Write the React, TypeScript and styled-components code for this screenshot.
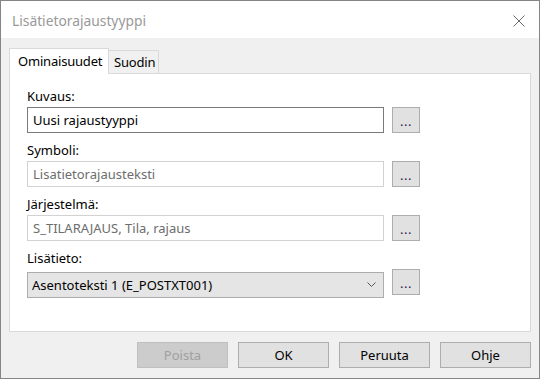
import React from 'react'
import styled, { createGlobalStyle } from 'styled-components'

const GlobalStyle = createGlobalStyle`
  html, body {
    margin: 0;
    padding: 0;
    background: #ffffff;
  }
`

const Window = styled.div`
  width: 540px;
  height: 379px;
  box-sizing: border-box;
  border: 1px solid #858585;
  display: flex;
  flex-direction: column;
  background: #f0f0f0;
  font-family: 'Noto Sans', 'Open Sans', sans-serif;
  font-size: 13px;
  color: #000;
`

const TitleBar = styled.div`
  height: 37px;
  flex: none;
  background: #fff;
  display: flex;
  align-items: center;
  justify-content: space-between;
  padding: 0 14px 0 11px;
`

const Title = styled.span`
  font-size: 13.8px;
  color: #999999;
  margin-top: 1px;
`

const CloseButton = styled.span`
  display: flex;
  width: 12px;
  height: 12px;
  margin-top: 2px;
`

const Body = styled.div`
  flex: 1;
  display: flex;
  flex-direction: column;
  padding: 10px 8px 0 8px;
`

const TabStrip = styled.div`
  display: flex;
  align-items: flex-end;
  height: 25px;
  position: relative;
  z-index: 1;
`

const Tab = styled.div<{ $active?: boolean }>`
  box-sizing: border-box;
  display: flex;
  align-items: center;
  border: 1px solid #d9d9d9;
  border-bottom: none;
  height: ${(p) => (p.$active ? '26px' : '23px')};
  margin-bottom: ${(p) => (p.$active ? '-1px' : '0')};
  background: ${(p) => (p.$active ? '#ffffff' : '#f0f0f0')};
  padding: ${(p) => (p.$active ? '0 8px 1px 8px' : '0 5px 0 5px')};
  ${(p) => (p.$active ? '' : 'border-left: none;')}
  width: ${(p) => (p.$active ? '100px' : '50px')};
  letter-spacing: -0.2px;
`

const Panel = styled.div`
  box-sizing: border-box;
  height: 259px;
  border: 1px solid #d9d9d9;
  background: #ffffff;
  padding: 14px 0 0 17px;
  display: flex;
  flex-direction: column;
  gap: 9px;
`

const Field = styled.div`
  display: flex;
  flex-direction: column;
`

const Label = styled.label`
  line-height: 17px;
  height: 17px;
  margin-bottom: 2px;
`

const Row = styled.div`
  display: grid;
  grid-template-columns: 357px 28px;
  column-gap: 8px;
  align-items: start;
`

const TextBox = styled.div<{ $disabled?: boolean }>`
  box-sizing: border-box;
  height: 26px;
  border: 1px solid ${(p) => (p.$disabled ? '#d2d2d2' : '#7a7a7a')};
  background: #ffffff;
  color: ${(p) => (p.$disabled ? '#6d6d6d' : '#000000')};
  display: flex;
  align-items: center;
  padding: 0 5px 1px 5px;
  white-space: nowrap;
  overflow: hidden;
`

const ComboBox = styled.div`
  box-sizing: border-box;
  height: 26px;
  border: 1px solid #adadad;
  background: #e5e5e5;
  display: flex;
  align-items: center;
  justify-content: space-between;
  padding: 0 6px 1px 4px;
  margin-top: 3px;
`

const Chevron = styled.svg`
  width: 9px;
  height: 5px;
  margin-right: 1px;
`

const EllipsisButton = styled.button`
  box-sizing: border-box;
  width: 28px;
  height: 26px;
  padding: 2px 0 0 0;
  border: 1px solid #adadad;
  background: #e1e1e1;
  font-family: inherit;
  font-size: 13px;
  color: #1e1e50;
  display: flex;
  align-items: center;
  justify-content: center;
  letter-spacing: 0.5px;
`

const ButtonRow = styled.div`
  display: flex;
  justify-content: flex-end;
  gap: 10px;
  margin-top: 10px;
`

const DialogButton = styled.button`
  box-sizing: border-box;
  width: 91px;
  height: 26px;
  padding: 0 0 1px 0;
  border: 1px solid #adadad;
  background: #e1e1e1;
  font-family: inherit;
  font-size: 13px;
  color: #000;

  &:disabled {
    background: #cccccc;
    border-color: #bfbfbf;
    color: #a0a0a0;
  }
`

const fields = [
  { label: 'Kuvaus:', value: 'Uusi rajaustyyppi', disabled: false },
  { label: 'Symboli:', value: 'Lisatietorajausteksti', disabled: true },
  { label: 'Järjestelmä:', value: 'S_TILARAJAUS, Tila, rajaus', disabled: true },
]

export default function App() {
  return (
    <>
      <GlobalStyle />
      <Window>
        <TitleBar>
          <Title>Lisätietorajaustyyppi</Title>
          <CloseButton>
            <svg width="12" height="12" viewBox="0 0 12 12">
              <path d="M0.5 0.5L11.5 11.5M11.5 0.5L0.5 11.5" stroke="#6b6b6b" strokeWidth="1" />
            </svg>
          </CloseButton>
        </TitleBar>
        <Body>
          <TabStrip>
            <Tab $active>Ominaisuudet</Tab>
            <Tab>Suodin</Tab>
          </TabStrip>
          <Panel>
            {fields.map((f) => (
              <Field key={f.label}>
                <Label>{f.label}</Label>
                <Row>
                  <TextBox $disabled={f.disabled}>{f.value}</TextBox>
                  <EllipsisButton>...</EllipsisButton>
                </Row>
              </Field>
            ))}
            <Field>
              <Label>Lisätieto:</Label>
              <Row>
                <ComboBox>
                  <span>Asentoteksti 1 (E_POSTXT001)</span>
                  <Chevron viewBox="0 0 9 5">
                    <path d="M0.5 0.5L4.5 4.5L8.5 0.5" fill="none" stroke="#555" strokeWidth="1" />
                  </Chevron>
                </ComboBox>
                <EllipsisButton>...</EllipsisButton>
              </Row>
            </Field>
          </Panel>
          <ButtonRow>
            <DialogButton disabled>Poista</DialogButton>
            <DialogButton>OK</DialogButton>
            <DialogButton>Peruuta</DialogButton>
            <DialogButton>Ohje</DialogButton>
          </ButtonRow>
        </Body>
      </Window>
    </>
  )
}
